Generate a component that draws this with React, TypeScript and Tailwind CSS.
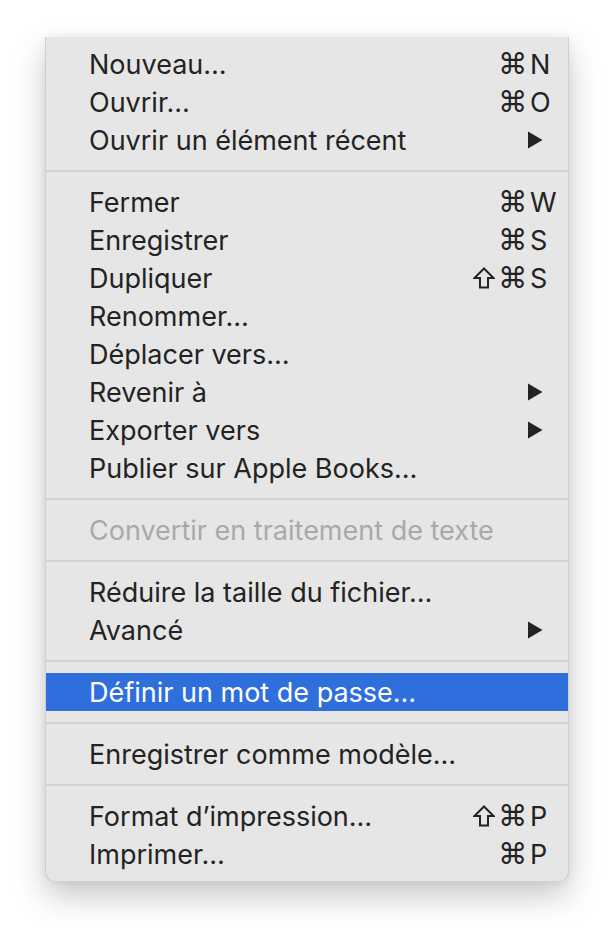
import React from "react";

type Item =
  | { type: "sep" }
  | {
      type: "item";
      label: string;
      shift?: boolean;
      cmd?: boolean;
      key?: string;
      submenu?: boolean;
      disabled?: boolean;
      active?: boolean;
    };

const items: Item[] = [
  { type: "item", label: "Nouveau…", cmd: true, key: "N" },
  { type: "item", label: "Ouvrir…", cmd: true, key: "O" },
  { type: "item", label: "Ouvrir un élément récent", submenu: true },
  { type: "sep" },
  { type: "item", label: "Fermer", cmd: true, key: "W" },
  { type: "item", label: "Enregistrer", cmd: true, key: "S" },
  { type: "item", label: "Dupliquer", shift: true, cmd: true, key: "S" },
  { type: "item", label: "Renommer…" },
  { type: "item", label: "Déplacer vers…" },
  { type: "item", label: "Revenir à", submenu: true },
  { type: "item", label: "Exporter vers", submenu: true },
  { type: "item", label: "Publier sur Apple Books…" },
  { type: "sep" },
  { type: "item", label: "Convertir en traitement de texte", disabled: true },
  { type: "sep" },
  { type: "item", label: "Réduire la taille du fichier…" },
  { type: "item", label: "Avancé", submenu: true },
  { type: "sep" },
  { type: "item", label: "Définir un mot de passe…", active: true },
  { type: "sep" },
  { type: "item", label: "Enregistrer comme modèle…" },
  { type: "sep" },
  { type: "item", label: "Format d’impression…", shift: true, cmd: true, key: "P" },
  { type: "item", label: "Imprimer…", cmd: true, key: "P" },
];

function Arrow({ color }: { color: string }) {
  return (
    <svg width="16" height="18" viewBox="0 0 16 18" className="block">
      <polygon points="1,0.5 15.5,9 1,17.5" fill={color} />
    </svg>
  );
}

function Shift({ color }: { color: string }) {
  return (
    <svg width="22" height="22" viewBox="0 0 22 22" className="block mr-[3px]">
      <polygon
        points="11,1.5 20.5,11 15,11 15,20.5 7,20.5 7,11 1.5,11"
        fill="none"
        stroke={color}
        strokeWidth="2"
        strokeLinejoin="miter"
      />
    </svg>
  );
}

export default function App() {
  return (
    <div className="w-[614px] h-[936px] bg-white overflow-hidden">
      <div
        className="ml-[45px] mt-[37px] w-[524px] bg-[#e6e6e6] border border-t-0 border-[#cfcfcf] rounded-b-[10px] py-[8px] shadow-[0_14px_32px_rgba(0,0,0,0.22),0_0_10px_rgba(0,0,0,0.06)]"
        style={{ fontFamily: "Inter, 'Noto Sans', sans-serif" }}
      >
        {items.map((it, i) => {
          if (it.type === "sep") {
            return (
              <div key={i} className="h-[24px] flex items-center">
                <div className="h-[2px] w-full bg-[#d3d3d3]" />
              </div>
            );
          }
          const color = it.active ? "#ffffff" : it.disabled ? "#a9a9a9" : "#232323";
          const textColor = it.active
            ? "text-white"
            : it.disabled
            ? "text-[#a9a9a9]"
            : "text-[#232323]";
          return (
            <div
              key={i}
              className={`h-[38px] flex items-center pl-[43px] pr-[12px] ${
                it.active ? "bg-[#2f6fdc]" : ""
              } ${textColor}`}
            >
              <span className="flex-1 text-[27px] leading-none whitespace-nowrap">
                {it.label}
              </span>
              <div className="flex items-center">
                {it.shift ? <Shift color={color} /> : null}
                {it.cmd ? (
                  <span
                    className="text-[29px] leading-none"
                    style={{ fontFamily: "'DejaVu Sans', sans-serif" }}
                  >
                    ⌘
                  </span>
                ) : null}
                <span className="w-[29px] text-[27px] leading-none flex items-center">
                  {it.key ? <span className="pl-[3px]">{it.key}</span> : null}
                  {it.submenu ? <Arrow color={color} /> : null}
                </span>
              </div>
            </div>
          );
        })}
      </div>
    </div>
  );
}
